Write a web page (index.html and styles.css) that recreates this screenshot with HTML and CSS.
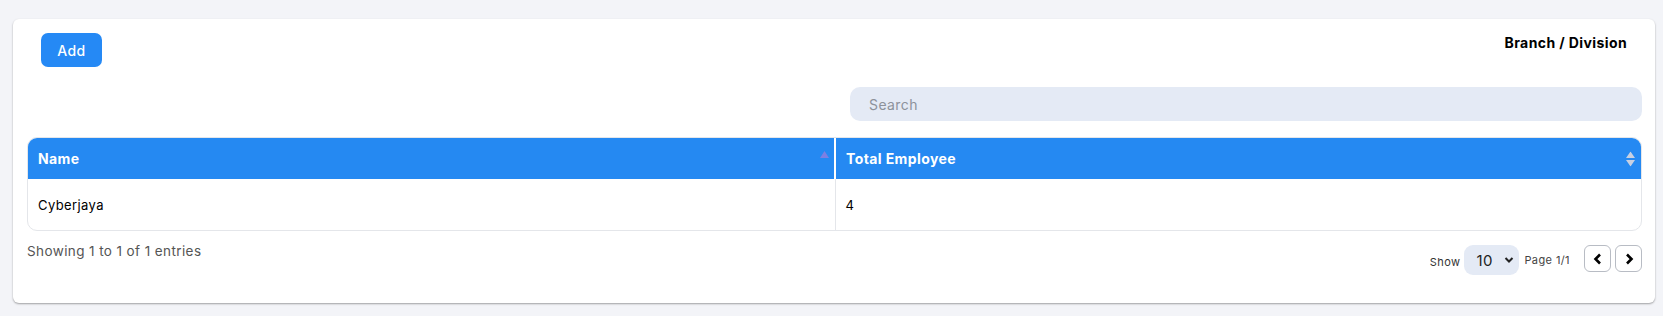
FILE: index.html
```html
<!DOCTYPE html>
<html lang="en">
  <head>
    <meta charset="UTF-8" />
    <meta name="viewport" content="width=device-width, initial-scale=1.0" />
    <title>Branch / Division</title>
    <link rel="stylesheet" href="styles.css">
  </head>
  <body>
    <div class="card">
      <div class="card-top">
        <button class="btn-add">Add</button>
        <h2 class="card-title">Branch / Division</h2>
      </div>

      <div class="search-row">
        <input class="search" type="text" placeholder="Search">
      </div>

      <div class="table-wrap">
        <table class="data-table">
          <thead>
            <tr>
              <th class="col-name">
                Name
                <span class="sort sort-asc">
                  <svg width="9" height="7" viewBox="0 0 9 7"><path d="M4.5 0 L9 7 L0 7 Z" fill="#7d7fe2"/></svg>
                </span>
              </th>
              <th>
                Total Employee
                <span class="sort">
                  <svg width="9" height="15" viewBox="0 0 9 15"><path d="M4.5 0 L9 6.5 L0 6.5 Z M4.5 15 L9 8.5 L0 8.5 Z" fill="#c7d0e2"/></svg>
                </span>
              </th>
            </tr>
          </thead>
          <tbody>
            <tr>
              <td>Cyberjaya</td>
              <td>4</td>
            </tr>
          </tbody>
        </table>
      </div>

      <div class="table-foot">
        <div class="entries">Showing 1 to 1 of 1 entries</div>
        <div class="pager">
          <span class="show-label">Show</span>
          <div class="select-box">
            <span>10</span>
            <svg width="10" height="8" viewBox="0 0 10 8"><path d="M1.5 2 L5 5.5 L8.5 2" fill="none" stroke="#222" stroke-width="2"/></svg>
          </div>
          <span class="page-label">Page 1/1</span>
          <div class="page-btns">
            <button class="page-btn">
              <svg width="10" height="12" viewBox="0 0 10 12"><path d="M7 1.5 L2.5 6 L7 10.5" fill="none" stroke="#000" stroke-width="2.6"/></svg>
            </button>
            <button class="page-btn">
              <svg width="10" height="12" viewBox="0 0 10 12"><path d="M3 1.5 L7.5 6 L3 10.5" fill="none" stroke="#000" stroke-width="2.6"/></svg>
            </button>
          </div>
        </div>
      </div>
    </div>
  </body>
</html>
```

FILE: styles.css
```css
* {
  margin: 0;
  padding: 0;
  box-sizing: border-box;
}

body {
  background-color: #f3f4f8;
  font-family: Inter, "Noto Sans", sans-serif;
  font-size: 13px;
  letter-spacing: 0.4px;
  color: #111;
  padding: 19px 8px 13px 13px;
}

.card {
  background: #fff;
  border-radius: 6px;
  box-shadow: 0 1px 2px rgba(0, 0, 0, 0.35);
  padding: 14px 13px 28px 14px;
}

.card-top {
  display: flex;
  justify-content: space-between;
  align-items: flex-start;
}

.btn-add {
  margin-left: 14px;
  width: 61px;
  height: 34px;
  border: none;
  border-radius: 7px;
  background: #2589f5;
  color: #fff;
  font-family: inherit;
  font-size: 14px;
  font-weight: 500;
  letter-spacing: 0.4px;
}

.card-title {
  margin-top: 1px;
  margin-right: 15px;
  font-size: 14px;
  font-weight: 700;
  color: #000;
}

.search-row {
  display: flex;
  justify-content: flex-end;
  margin-top: 20px;
}

.search {
  width: 792px;
  height: 34px;
  border: none;
  border-radius: 10px;
  background: #e4eaf5;
  padding: 0 19px;
  font-family: inherit;
  font-size: 14px;
  letter-spacing: 0.4px;
  outline: none;
}

.search::placeholder {
  color: #8d929b;
}

.table-wrap {
  margin-top: 16px;
  border: 1px solid #e4e6ea;
  border-radius: 10px;
  overflow: hidden;
}

.data-table {
  width: 100%;
  border-collapse: collapse;
  table-layout: fixed;
}

.data-table th {
  position: relative;
  background: #2589f2;
  color: #fff;
  text-align: left;
  font-size: 14px;
  font-weight: 700;
  height: 41px;
  padding: 0 10px;
}

.data-table th.col-name {
  width: 807px;
  border-right: 2px solid #fff;
}

.data-table td {
  height: 51px;
  padding: 0 10px;
  font-size: 13px;
  color: #000;
}

.data-table td:first-child {
  border-right: 1px solid #e4e6ea;
}

.sort {
  position: absolute;
  right: 6px;
  top: 50%;
  transform: translateY(-50%);
  display: flex;
}

.sort-asc {
  right: 5px;
  top: 13px;
  transform: none;
}

.table-foot {
  display: flex;
  justify-content: space-between;
  align-items: flex-start;
  margin-top: 12px;
}

.entries {
  font-size: 13.5px;
  color: #555;
}

.pager {
  display: flex;
  align-items: center;
  margin-top: 2px;
}

.show-label {
  font-size: 11px;
  color: #333;
  margin-top: 4px;
}

.select-box {
  display: flex;
  align-items: center;
  justify-content: space-between;
  width: 55px;
  height: 30px;
  margin-left: 4px;
  padding: 0 5px 0 12px;
  border-radius: 9px;
  background: #e4eaf5;
  font-size: 15px;
  color: #222;
}

.page-label {
  margin-left: 5px;
  font-size: 11px;
  color: #444;
}

.page-btns {
  display: flex;
  gap: 4px;
  margin-left: 14px;
  align-self: flex-start;
}

.page-btn {
  display: flex;
  align-items: center;
  justify-content: center;
  width: 27px;
  height: 27px;
  border: 1px solid #b8bcc4;
  border-radius: 6px;
  background: #fff;
}
```
